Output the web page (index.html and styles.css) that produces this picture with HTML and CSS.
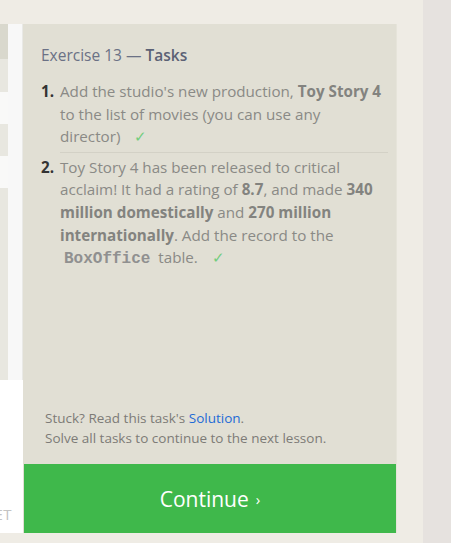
FILE: index.html
```html
<!DOCTYPE html>
<html>
<head>
<meta charset="utf-8">
<link rel="stylesheet" href="styles.css">
</head>
<body>
<div class="main">
  <div class="left">
    <div class="rows">
      <div class="row head"></div>
      <div class="row alt"></div>
      <div class="row"></div>
      <div class="row alt"></div>
      <div class="row"></div>
      <div class="row alt fill"></div>
    </div>
    <div class="scroll"></div>
  </div>
  <div class="leftbottom"><span class="reset">RESET</span></div>
  <div class="panel">
    <div class="content">
      <h2 class="title">Exercise 13 — <b>Tasks</b></h2>
      <ol class="tasks">
        <li><span class="num">1.</span><div class="txt">Add the studio's new production, <b>Toy Story 4</b> to the list of movies (you can use any director) <span class="check">✓</span></div></li>
        <li class="sep"><span class="num">2.</span><div class="txt">Toy Story 4 has been released to critical acclaim! It had a rating of <b>8.7</b>, and made <b>340 million domestically</b> and <b>270 million internationally</b>. Add the record to the <code>BoxOffice</code> table. <span class="check">✓</span></div></li>
      </ol>
      <div class="foot">
        <p>Stuck? Read this task's <a href="#">Solution</a>.</p>
        <p>Solve all tasks to continue to the next lesson.</p>
      </div>
    </div>
    <div class="continue">Continue <span class="arr">›</span></div>
  </div>
</div>
<div class="strip"></div>
</body>
</html>
```
FILE: styles.css
```css
html, body { margin: 0; padding: 0; }
body {
  width: 451px;
  height: 543px;
  overflow: hidden;
  background: #efece5;
  display: flex;
  font-family: "Open Sans", Lato, sans-serif;
}
.main {
  width: 423px;
  padding-top: 24px;
  box-sizing: border-box;
  display: grid;
  grid-template-columns: 23px 374px;
  grid-template-rows: 356px 153px;
  height: 533px;
}
.strip { width: 28px; background: #e6e2df; height: 543px; }
.left { display: flex; grid-row: 1; grid-column: 1; }
.rows { width: 8px; display: flex; flex-direction: column; }
.row { height: 32px; background: #f9f9f8; }
.row.head { height: 35px; background: #d9d8cd; }
.row.alt { background: #e8e7e0; }
.row.alt:nth-child(2) { height: 33px; }
.row.fill { flex: 1; }
.scroll {
  width: 14px;
  background: #f8f8f8;
  border-right: 1px solid #e9e9e6;
}
.leftbottom {
  grid-row: 2; grid-column: 1;
  background: #ffffff;
  overflow: hidden;
  display: flex;
  align-items: flex-end;
  justify-content: flex-end;
  padding-bottom: 9px;
  box-sizing: border-box;
}
.reset {
  color: #c4c4c4;
  font-size: 15px;
  margin-right: 11px;
  letter-spacing: 0.5px;
}
.panel {
  grid-row: 1 / span 2; grid-column: 2;
  background: #e1dfd4;
  border-right: 1px solid #e6e4da;
  display: flex;
  flex-direction: column;
}
.content {
  flex: 1;
  padding: 20px 8px 0 18px;
  display: flex;
  flex-direction: column;
}
.title {
  margin: 0;
  font-size: 15.5px;
  font-weight: normal;
  color: #6b7185;
  line-height: 22px;
}
.title b { color: #5b6174; font-weight: 600; }
.tasks {
  list-style: none;
  margin: 14px 0 0 0;
  padding: 0;
}
.tasks li {
  display: flex;
  font-size: 15.2px;
  line-height: 22.6px;
  color: #8a8a86;
}
.tasks li.sep {
  border-top: 1px solid #d3d1c6;
  margin-left: 19px;
  margin-top: 4px;
  padding-top: 3px;
}
.tasks li.sep .num { margin-left: -19px; }
.num {
  width: 19px;
  flex: none;
  color: #333;
  font-weight: bold;
}
.txt { flex: 1; padding-right: 4px; }
.txt b { color: #83837f; font-weight: 700; }
code {
  font-family: "Liberation Mono", monospace;
  font-weight: bold;
  font-size: 16px;
  color: #909090;
  padding: 0 4px;
  line-height: 26px;
}
.check { color: #72cd7e; margin-left: 10px; }
.foot {
  margin-top: auto;
  padding-left: 4px;
  padding-bottom: 16px;
  font-size: 13.5px;
  line-height: 20px;
  color: #7d7b77;
}
.foot p { margin: 0; }
.foot a { color: #1e6bd6; text-decoration: none; }
.continue {
  height: 69px;
  margin-left: 1px;
  background: #3fb84b;
  color: #fff;
  font-size: 21px;
  display: flex;
  align-items: center;
  justify-content: center;
}
.arr { font-size: 15px; margin-left: 7px; }
```
